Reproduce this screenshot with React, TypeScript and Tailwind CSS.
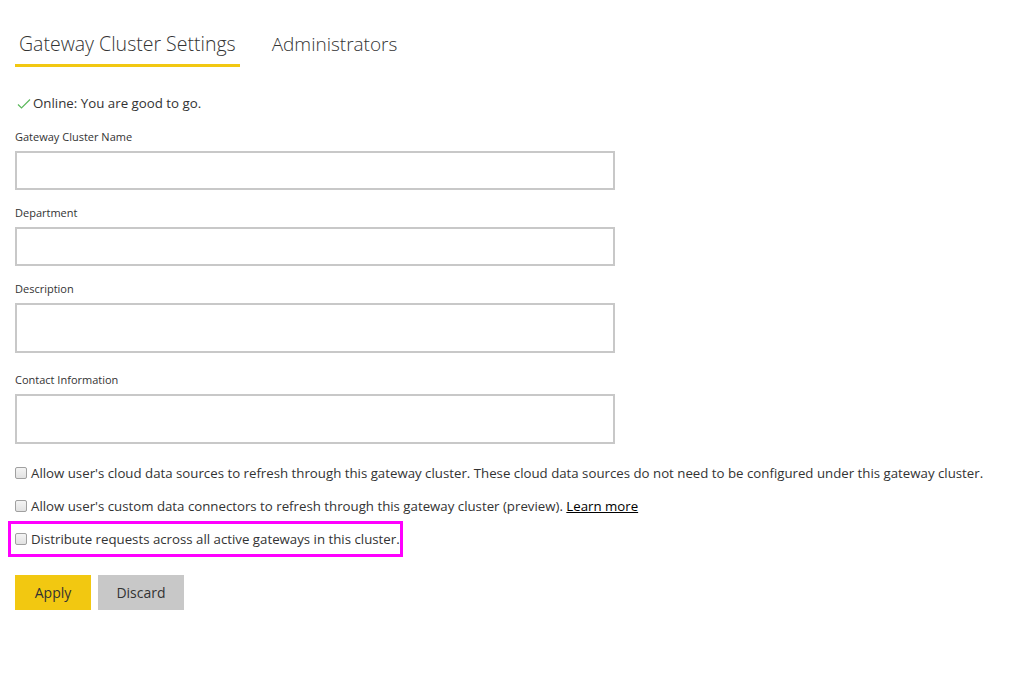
import React from 'react';

const Field = ({ label, tall, top }: { label: string; tall?: boolean; top: string }) => (
  <div className={`flex flex-col ${top}`}>
    <label className="text-[11px] leading-[14px] text-[#333]">{label}</label>
    <div className={`mt-[7px] w-[600px] border-2 border-[#c8c8c8] bg-white ${tall ? 'h-[50px]' : 'h-[39px]'}`} />
  </div>
);

const Check = ({ children }: { children: React.ReactNode }) => (
  <div className="flex items-center gap-[4px] whitespace-nowrap">
    <span className="w-[12px] h-[12px] shrink-0 rounded-[2px] border border-[#a0a0a0] bg-gradient-to-b from-[#f4f4f4] to-[#e2e2e2]" />
    <span className="text-[13.25px] leading-[18px] text-[#333]">{children}</span>
  </div>
);

export default function App() {
  return (
    <div className="min-h-[678px] bg-white pl-[15px] pt-[28px]" style={{ fontFamily: '"Open Sans", "Noto Sans", sans-serif' }}>
      <div className="flex gap-[32px]">
        <div className="flex flex-col">
          <span className="px-[4px] text-[19.5px] leading-[32px] font-light text-[#333]">Gateway Cluster Settings</span>
          <div className="mt-[4px] h-[3px] bg-[#f2c811]" />
        </div>
        <span className="text-[19px] leading-[32px] font-light text-[#333]">Administrators</span>
      </div>

      <div className="mt-[27px] flex items-center gap-[2px] text-[13.3px] text-[#333]">
        <svg width="14" height="12" viewBox="0 0 14 12" className="ml-[2px]">
          <path d="M1 6.5 L4.5 10 L13 1.5" fill="none" stroke="#5cb85c" strokeWidth="1.2" />
        </svg>
        <span>Online: You are good to go.</span>
      </div>

      <Field label="Gateway Cluster Name" top="mt-[16px]" />
      <Field label="Department" top="mt-[16px]" />
      <Field label="Description" top="mt-[16px]" tall />
      <Field label="Contact Information" top="mt-[20px]" tall />

      <div className="mt-[20px] flex flex-col">
        <Check>Allow user's cloud data sources to refresh through this gateway cluster. These cloud data sources do not need to be configured under this gateway cluster.</Check>
        <div className="mt-[15px]">
          <Check>
            Allow user's custom data connectors to refresh through this gateway cluster (preview).{' '}
            <a className="text-black underline">Learn more</a>
          </Check>
        </div>
        <div className="mt-[6px] -ml-[7px] w-[395px] border-[3px] border-[#ff00ff] pl-[4px] py-[6px]">
          <Check>Distribute requests across all active gateways in this cluster.</Check>
        </div>
      </div>

      <div className="mt-[18px] flex gap-[7px]">
        <button className="w-[76px] h-[35px] bg-[#f2c811] text-[14px] text-[#333]">Apply</button>
        <button className="w-[86px] h-[35px] bg-[#c8c8c8] text-[14px] text-[#333]">Discard</button>
      </div>
    </div>
  );
}
